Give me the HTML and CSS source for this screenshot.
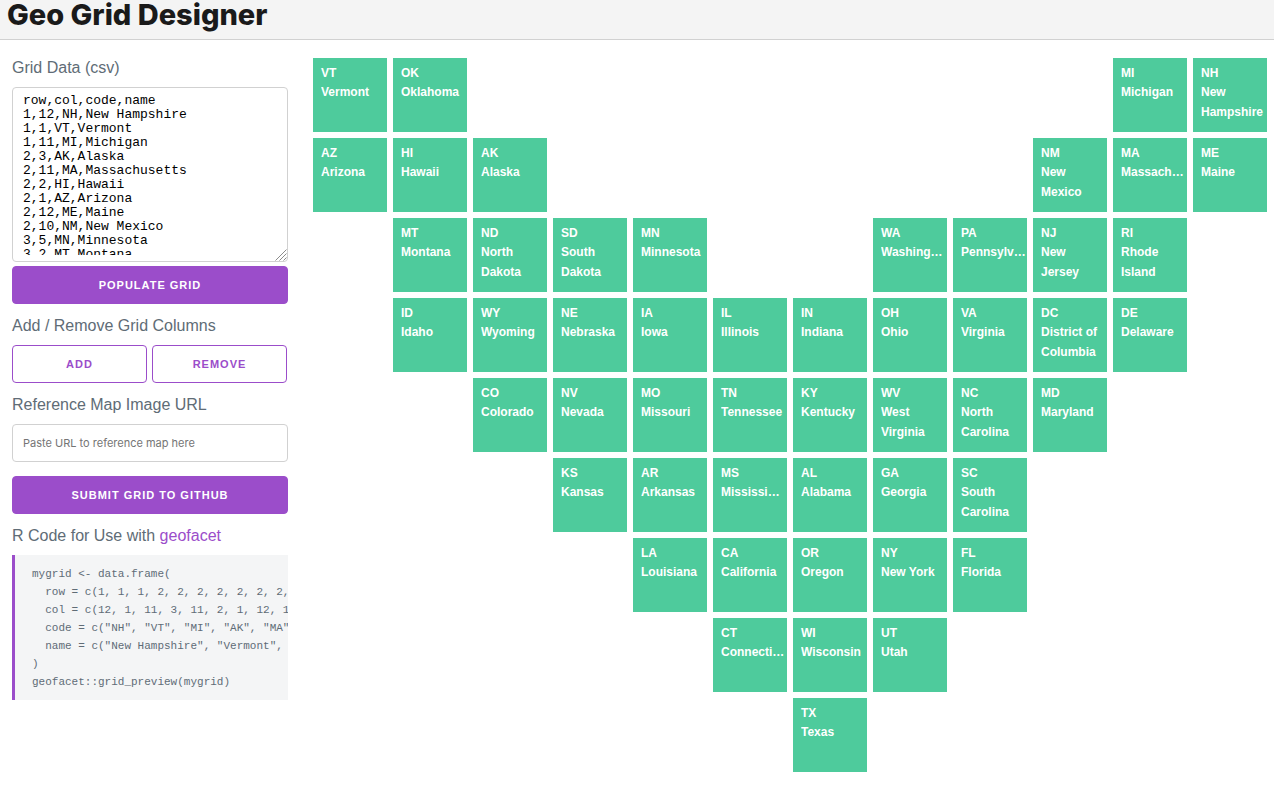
FILE: index.html
```html
<!DOCTYPE html>
<html lang="en">
<head>
<meta charset="utf-8">
<title>Geo Grid Designer</title>
<link rel="stylesheet" href="styles.css">
</head>
<body>
<header class="topbar"><h1 class="title">Geo Grid Designer</h1></header>
<main class="layout">
  <aside class="sidebar">
    <label class="heading" for="csv">Grid Data (csv)</label>
    <div class="csv-box">
      <textarea class="csv" id="csv" spellcheck="false">row,col,code,name
1,12,NH,New Hampshire
1,1,VT,Vermont
1,11,MI,Michigan
2,3,AK,Alaska
2,11,MA,Massachusetts
2,2,HI,Hawaii
2,1,AZ,Arizona
2,12,ME,Maine
2,10,NM,New Mexico
3,5,MN,Minnesota
3,2,MT,Montana
1,2,OK,Oklahoma
3,3,ND,North Dakota
3,4,SD,South Dakota
3,8,WA,Washington
3,9,PA,Pennsylvania
3,10,NJ,New Jersey
3,11,RI,Rhode Island
4,2,ID,Idaho
4,3,WY,Wyoming
4,4,NE,Nebraska
4,5,IA,Iowa
4,6,IL,Illinois
4,7,IN,Indiana
4,8,OH,Ohio
4,9,VA,Virginia
4,10,DC,District of Columbia
4,11,DE,Delaware
5,3,CO,Colorado
5,4,NV,Nevada
5,5,MO,Missouri
5,6,TN,Tennessee
5,7,KY,Kentucky
5,8,WV,West Virginia
5,9,NC,North Carolina
5,10,MD,Maryland
6,4,KS,Kansas
6,5,AR,Arkansas
6,6,MS,Mississi…
6,7,AL,Alabama
6,8,GA,Georgia
6,9,SC,South Carolina
7,5,LA,Louisiana
7,6,CA,California
7,7,OR,Oregon
7,8,NY,New York
7,9,FL,Florida
8,6,CT,Connecticut
8,7,WI,Wisconsin
8,8,UT,Utah
9,7,TX,Texas</textarea>
      <svg class="grip" viewBox="0 0 12 12" aria-hidden="true"><path d="M0.5 11.5 11.5 0.5M4.5 11.5 11.5 4.5M8.5 11.5 11.5 8.5" fill="none" stroke="#8c8c8c"/></svg>
    </div>
    <button class="button" id="populate" type="button">Populate Grid</button>
    <h2 class="heading">Add / Remove Grid Columns</h2>
    <div class="button-row">
      <button class="button outline" type="button">Add</button>
      <button class="button outline" type="button">Remove</button>
    </div>
    <label class="heading" for="url">Reference Map Image URL</label>
    <input class="url" id="url" type="text" placeholder="Paste URL to reference map here">
    <button class="button" type="button">Submit Grid to GitHub</button>
    <h2 class="heading">R Code for Use with <a class="link" href="#">geofacet</a></h2>
    <pre class="code"><code>mygrid &lt;- data.frame(
  row = c(1, 1, 1, 2, 2, 2, 2, 2, 2, 2, 3, 3),
  col = c(12, 1, 11, 3, 11, 2, 1, 12, 10, 5, 2),
  code = c("NH", "VT", "MI", "AK", "MA", "HI"),
  name = c("New Hampshire", "Vermont", "Michigan")
)
geofacet::grid_preview(mygrid)</code></pre>
  </aside>
  <section class="grid" id="grid" aria-label="Grid"></section>
</main>
<script src="grid.js"></script>
</body>
</html>
```
FILE: styles.css
```css
* { box-sizing: border-box; }
body {
  margin: 0;
  background: #fff;
  color: #606c76;
  font-family: "Liberation Sans", Arial, sans-serif;
  font-size: 16px;
}
.topbar {
  height: 40px;
  padding: 0 7px;
  background: #f4f4f4;
  border-bottom: 1px solid #d1d1d1;
}
.title {
  margin: 0;
  color: #1a1a1a;
  font: 800 29px/30px Inter, sans-serif;
}
.layout {
  display: flex;
  align-items: flex-start;
  gap: 25px;
  padding: 18px 7px 18px 12px;
}
.sidebar {
  display: flex;
  flex: 0 0 276px;
  flex-direction: column;
  min-width: 0;
}
.heading {
  margin: 12px 0 9px;
  font-size: 16px;
  font-weight: 400;
  line-height: 20px;
}
.heading:first-child { margin-top: 0; }
.link { color: #9b4dca; text-decoration: none; }
.csv-box {
  position: relative;
  display: flex;
  height: 175px;
  margin-bottom: 4px;
  padding: 6px 10px;
  border: 1px solid #d1d1d1;
  border-radius: 4px;
}
.csv {
  flex: 1;
  min-width: 0;
  padding: 0;
  border: 0;
  outline: 0;
  overflow: hidden;
  resize: none;
  background: transparent;
  color: #000;
  font: 13px/14px "Liberation Mono", monospace;
  white-space: pre;
}
.grip { position: absolute; right: 0; bottom: 0; width: 12px; height: 12px; }
.button {
  height: 38px;
  padding: 0 10px;
  border: 1px solid #9b4dca;
  border-radius: 4px;
  background: #9b4dca;
  color: #fff;
  font: 700 11px/36px "Liberation Sans", Arial, sans-serif;
  letter-spacing: 1px;
  text-transform: uppercase;
  cursor: pointer;
}
.button-row { display: flex; gap: 5px; margin-right: 1px; }
.outline { flex: 1; background: transparent; color: #9b4dca; }
.url {
  height: 38px;
  margin-bottom: 14px;
  padding: 6px 10px;
  border: 1px solid #d1d1d1;
  border-radius: 4px;
  font: 11px Inter, sans-serif;
}
.url::placeholder { color: #757575; }
.code {
  margin: 0;
  padding: 10px 0 9px 17px;
  overflow: hidden;
  border-left: 3px solid #9b4dca;
  background: #f4f5f6;
  font: 11px/18px "Liberation Mono", monospace;
}
.code code { font: inherit; }
.grid {
  display: grid;
  flex: 1;
  grid-template-columns: repeat(12, minmax(0, 1fr));
  gap: 6px;
}
.tile {
  aspect-ratio: 1;
  min-width: 0;
  min-height: 0;
  padding: 6px 1px 0 8px;
  overflow: hidden;
  background: #4ecb9c;
  color: #fff;
  font-size: 12px;
  font-weight: 700;
}
.tile-code { line-height: 18px; }
.tile-name { overflow: hidden; line-height: 20px; text-overflow: ellipsis; }
```
FILE: grid.js
```js
const csv = document.getElementById("csv");
const grid = document.getElementById("grid");

function populate() {
  grid.replaceChildren();
  for (const line of csv.value.trim().split("\n").slice(1)) {
    const [row, col, code, name] = line.split(",");
    const tile = document.createElement("div");
    tile.className = "tile";
    tile.style.gridArea = `${row} / ${col}`;
    for (const [cls, text] of [["tile-code", code], ["tile-name", name]]) {
      const el = document.createElement("div");
      el.className = cls;
      el.textContent = text;
      tile.append(el);
    }
    grid.append(tile);
  }
}

document.getElementById("populate").addEventListener("click", populate);
populate();
```
